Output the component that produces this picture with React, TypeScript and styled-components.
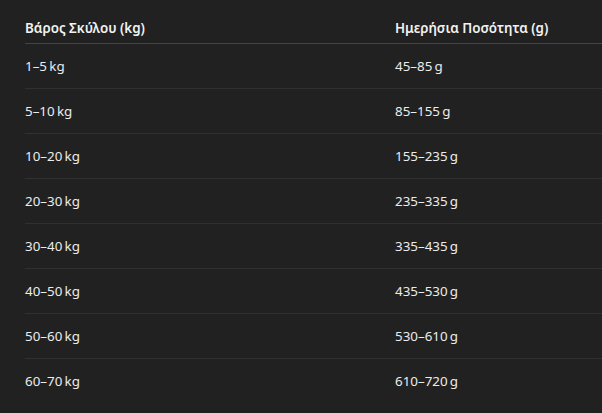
import React from "react";
import styled, { createGlobalStyle } from "styled-components";

const Global = createGlobalStyle`
  html, body { margin: 0; padding: 0; background: #212121; overflow: hidden; }
  body { font-family: "Noto Sans", "Open Sans", sans-serif; }
`;

const Page = styled.div`
  width: 602px;
  height: 413px;
  background: #212121;
  overflow: hidden;
  padding-left: 25px;
  box-sizing: border-box;
`;

const Table = styled.table`
  border-collapse: collapse;
  width: 640px;
  font-size: 13.4px;
  color: #ececec;
`;

const HeadCell = styled.th<{ $w?: number }>`
  text-align: left;
  font-weight: 600;
  color: #f2f2f2;
  line-height: 20px;
  padding: 18px 0 5px 0;
  border-bottom: 1px solid #454545;
  width: ${(p) => (p.$w ? `${p.$w}px` : "auto")};
`;

const Cell = styled.td`
  line-height: 20px;
  padding: 12px 0;
  height: 20px;
  border-bottom: 1px solid #303030;
`;

const Row = styled.tr`
  &:last-child > td { border-bottom: none; }
`;

const rows: [string, string][] = [
  ["1–5\u202Fkg", "45–85\u202Fg"],
  ["5–10\u202Fkg", "85–155\u202Fg"],
  ["10–20\u202Fkg", "155–235\u202Fg"],
  ["20–30\u202Fkg", "235–335\u202Fg"],
  ["30–40\u202Fkg", "335–435\u202Fg"],
  ["40–50\u202Fkg", "435–530\u202Fg"],
  ["50–60\u202Fkg", "530–610\u202Fg"],
  ["60–70\u202Fkg", "610–720\u202Fg"],
];

export default function App() {
  return (
    <Page>
      <Global />
      <Table>
        <thead>
          <tr>
            <HeadCell $w={370}>Βάρος Σκύλου (kg)</HeadCell>
            <HeadCell>Ημερήσια Ποσότητα (g)</HeadCell>
          </tr>
        </thead>
        <tbody>
          {rows.map(([a, b]) => (
            <Row key={a}>
              <Cell>{a}</Cell>
              <Cell>{b}</Cell>
            </Row>
          ))}
        </tbody>
      </Table>
    </Page>
  );
}
